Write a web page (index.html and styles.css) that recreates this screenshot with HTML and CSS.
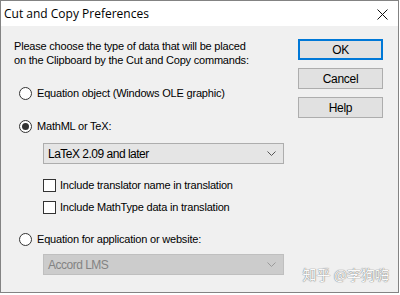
FILE: index.html
```html
<!DOCTYPE html>
<html>
  <head>
    <meta charset="utf-8">
    <title>Cut and Copy Preferences</title>
    <link rel="stylesheet" href="styles.css">
  </head>
  <body>
    <div class="window">
      <div class="titlebar">
        <span class="title">Cut and Copy Preferences</span>
        <svg class="close" width="11" height="11" viewBox="0 0 11 11">
          <path d="M0.5 0.5 L10.5 10.5 M10.5 0.5 L0.5 10.5" stroke="#111" stroke-width="1" fill="none"/>
        </svg>
      </div>

      <div class="content">
        <div class="options">
          <p class="intro">Please choose the type of data that will be placed<br>on the Clipboard by the Cut and Copy commands:</p>

          <div class="row radio_row first">
            <span class="radio"></span>
            <span>Equation object (Windows OLE graphic)</span>
          </div>

          <div class="row radio_row">
            <span class="radio checked"></span>
            <span>MathML or TeX:</span>
          </div>

          <div class="select">
            <span>LaTeX 2.09 and later</span>
            <svg class="chevron" width="9" height="5" viewBox="0 0 9 5">
              <path d="M0.5 0.5 L4.5 4.5 L8.5 0.5" stroke="#555" stroke-width="1" fill="none"/>
            </svg>
          </div>

          <div class="row check_row first_check">
            <span class="checkbox"></span>
            <span>Include translator name in translation</span>
          </div>

          <div class="row check_row">
            <span class="checkbox"></span>
            <span>Include MathType data in translation</span>
          </div>

          <div class="row radio_row third">
            <span class="radio"></span>
            <span>Equation for application or website:</span>
          </div>

          <div class="select disabled">
            <span>Accord LMS</span>
            <svg class="chevron" width="9" height="5" viewBox="0 0 9 5">
              <path d="M0.5 0.5 L4.5 4.5 L8.5 0.5" stroke="#9a9a9a" stroke-width="1" fill="none"/>
            </svg>
          </div>
        </div>

        <div class="buttons">
          <div class="button default">OK</div>
          <div class="button">Cancel</div>
          <div class="button">Help</div>
        </div>
      </div>

      <div class="watermark">知乎 @李狗嗨</div>
    </div>
  </body>
</html>
```

FILE: styles.css
```css
body {
  margin: 0;
  background: #fff;
  font-family: "Liberation Sans", Arial, sans-serif;
  font-size: 11px;
  letter-spacing: -0.2px;
  color: #000;
}

.window {
  position: relative;
  width: 397px;
  height: 291px;
  border: 1px solid #838383;
  background: #f0f0f0;
}

.titlebar {
  height: 25px;
  background: #fff;
  display: flex;
  align-items: center;
  justify-content: space-between;
  padding: 0 10px 0 3px;
}

.title {
  font-family: "Open Sans", "Noto Sans", sans-serif;
  font-size: 12px;
  letter-spacing: 0;
  color: #000;
}

.close {
  margin-top: 1px;
}

.content {
  display: flex;
  justify-content: space-between;
  padding-right: 15px;
}

.options {
  padding-left: 13px;
}

.intro {
  margin: 13px 0 0 0;
  line-height: 14px;
}

.row {
  display: flex;
  align-items: center;
  height: 14px;
  line-height: 14px;
}

.radio_row {
  margin-left: 5px;
  gap: 5px;
}

.radio_row.first {
  margin-top: 19px;
}

.radio_row + .radio_row {
  margin-top: 19px;
}

.radio_row.third {
  margin-top: 18px;
}

.radio {
  width: 11px;
  height: 11px;
  border: 1px solid #333;
  border-radius: 50%;
  background: #fff;
  display: flex;
  align-items: center;
  justify-content: center;
}

.radio.checked::after {
  content: "";
  width: 7px;
  height: 7px;
  border-radius: 50%;
  background: #333;
}

.select {
  margin: 10px 0 0 29px;
  width: 235px;
  height: 19px;
  border: 1px solid #adadad;
  background: #e5e5e5;
  display: flex;
  align-items: center;
  justify-content: space-between;
  padding-left: 4px;
  font-size: 12px;
  letter-spacing: -0.5px;
}

.select .chevron {
  margin-right: 7px;
}

.select.disabled {
  margin-top: 8px;
  background: #cccccc;
  border-color: #bfbfbf;
  color: #838383;
}

.check_row {
  margin-left: 29px;
  gap: 4px;
}

.check_row.first_check {
  margin-top: 14px;
}

.check_row + .check_row {
  margin-top: 8px;
}

.checkbox {
  width: 11px;
  height: 11px;
  border: 1px solid #333;
  background: #fff;
}

.buttons {
  margin-top: 13px;
  display: flex;
  flex-direction: column;
  gap: 8px;
}

.button {
  width: 83px;
  height: 19px;
  border: 1px solid #adadad;
  background: #e1e1e1;
  display: flex;
  align-items: center;
  justify-content: center;
  font-size: 12px;
  letter-spacing: -0.3px;
}

.button.default {
  width: 81px;
  height: 17px;
  border: 2px solid #0078d7;
}

.watermark {
  position: absolute;
  right: 9px;
  bottom: 8px;
  font-family: "Noto Sans CJK SC", sans-serif;
  font-size: 14px;
  letter-spacing: 0;
  color: #fafafa;
  text-shadow: 0 0 1px #7a7a7a, 0 0 1px #7a7a7a;
}
```
